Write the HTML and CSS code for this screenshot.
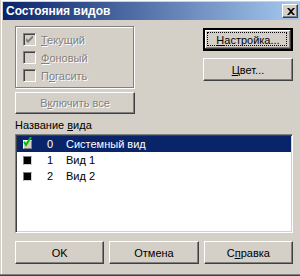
FILE: index.html
```html
<!DOCTYPE html>
<html>
<head>
<title>Состояния видов</title>
<meta charset="utf-8">
<link rel="stylesheet" href="styles.css">
</head>
<body>

<div class="window">

<div class="titlebar">
<span class="title">Состояния видов</span>
<div class="close">
<svg width="8" height="7" viewBox="0 0 8 7"><path d="M0 0h2l2 2 2-2h2L5 3.5 8 7H6L4 5 2 7H0l3-3.5z" fill="#000"/></svg>
</div>
</div>

<div class="client">

<div class="top">
<div class="left-col">
<div class="group">
<label class="check disabled"><span class="box"><svg width="7" height="7" viewBox="0 0 7 7"><path d="M0 2v3l2 2 5-5V-1L2 4z" fill="#808080"/></svg></span><span class="caption"><u>Т</u>екущий</span></label>
<label class="check disabled"><span class="box"></span><span class="caption"><u>Ф</u>оновый</span></label>
<label class="check disabled"><span class="box"></span><span class="caption">П<u>о</u>гасить</span></label>
</div>
<div class="btn wide disabled">В<u>к</u>лючить все</div>
</div>

<div class="right-col">
<div class="btn default"><u>Н</u>астройка...</div>
<div class="btn"><u>Ц</u>вет...</div>
</div>
</div>

<div class="list-label">Название <u>в</u>ида</div>

<div class="list">
<div class="row selected">
<span class="icon on"><svg width="9" height="11" viewBox="0 0 9 11"><path d="M1 5l2 3 5-8" stroke="#00c000" stroke-width="2" fill="none"/></svg></span>
<span class="num">0</span>
<span class="name">Системный вид</span>
</div>
<div class="row">
<span class="icon"></span>
<span class="num">1</span>
<span class="name">Вид 1</span>
</div>
<div class="row">
<span class="icon"></span>
<span class="num">2</span>
<span class="name">Вид 2</span>
</div>
</div>

<div class="bottom">
<div class="btn">OK</div>
<div class="btn">Отмена</div>
<div class="btn">С<u>п</u>равка</div>
</div>

</div>
</div>

</body>
</html>
```

FILE: styles.css
```css
body {
   background: #d4d0c8;
   color: #000;
   font-family: 'Liberation Sans', Arial, sans-serif;
   font-size: 11px;
   margin: 0;}

u {
   text-decoration: underline;
   text-underline-offset: 1px;}

.window {
   background: #d4d0c8;
   box-shadow: inset 0 -1px #404040, inset 0 -2px #808080, inset 1px 0 #d4d0c8, inset 2px 1px #fff;
   box-sizing: border-box;
   padding: 2px 0 3px 3px;
   height:276px; width:300px;}

/* caption */
.titlebar {
   align-items: center;
   background: linear-gradient(to right, #0a246a, #a6caf0);
   display: flex;
   justify-content: space-between;
   padding: 0 2px 0 3px;
   height:18px;}

.title {
   color: #fff;
   font-size: 12px;
   font-weight: bold;}

.close {
   align-items: center;
   background: #d4d0c8;
   border: 1px solid;
   border-color: #fff #404040 #404040 #fff;
   box-shadow: inset -1px -1px #808080, inset 1px 1px #d4d0c8;
   box-sizing: border-box;
   display: flex;
   justify-content: center;
   height:14px; width:16px;}

.close svg {
   margin: 0 0 0 1px;}

/* client */
.client {
   padding: 6px 7px 0 12px;}

.top {
   display: flex;
   justify-content: space-between;}

.left-col {
   width:120px;}

.right-col {
   display: flex;
   flex-direction: column;
   gap: 7px;
   padding-top: 2px;
   width:90px;}

.group {
   border: 1px solid #808080;
   box-shadow: inset 1px 1px #fff, 1px 1px #fff;
   box-sizing: border-box;
   padding: 6px 0 0 7px;
   height:62px; width:119px;}

.check {
   align-items: center;
   display: flex;
   gap: 5px;
   margin-bottom: 5px;
   height:13px;}

.box {
   align-items: center;
   background: #d4d0c8;
   border: 1px solid;
   border-color: #808080 #fff #fff #808080;
   box-shadow: inset 1px 1px #404040, inset -1px -1px #d4d0c8;
   box-sizing: border-box;
   display: flex;
   justify-content: center;
   height:13px; width:13px;}

.disabled {
   color: #808080;
   text-shadow: 1px 1px #fff;}

/* buttons */
.btn {
   align-items: center;
   background: #d4d0c8;
   border: 1px solid;
   border-color: #fff #404040 #404040 #fff;
   box-shadow: inset -1px -1px #808080, inset 1px 1px #d4d0c8;
   box-sizing: border-box;
   display: flex;
   justify-content: center;
   position: relative;
   height:23px;}

.btn.wide {
   margin-top: 4px;
   height:22px;}

.btn.default {
   border: 2px solid;
   border-color: #000;
   box-shadow: inset -1px -1px #404040, inset 1px 1px #fff, inset -2px -2px #808080;}

.btn.default:after {
   border: 1px dotted #000;
   content: '';
   position: absolute;
   top: 2px; left: 2px; right: 4px; bottom: 3px;}

/* list */
.list-label {
   line-height: 13px;
   margin-top: 5px;}

.list {
   background: #fff;
   border: 1px solid;
   border-color: #808080 #fff #fff #808080;
   box-shadow: inset 1px 1px #404040, inset -1px -1px #d4d0c8;
   box-sizing: border-box;
   margin-top: 2px;
   padding: 1px;
   height:99px; width:278px;}

.row {
   align-items: center;
   display: flex;
   padding-left: 6px;
   height:16px;}

.row.selected {
   background: #0a246a;
   color: #fff;}

.icon {
   background: #000;
   border: 1px solid;
   border-color: #808080 #d4d0c8 #d4d0c8 #808080;
   box-sizing: border-box;
   position: relative;
   height:9px; width:9px;}

.icon.on {
   background: #d4d0c8;
   border-color: #fff #808080 #808080 #fff;}

.icon.on svg {
   position: absolute;
   top: -4px; left: -1px;}

.num {
   margin-left: 15px;
   width:19px;}

/* bottom row */
.bottom {
   display: flex;
   gap: 5px;
   margin-top: 8px;
   width:278px;}

.bottom .btn {
   flex: 1;}
```
